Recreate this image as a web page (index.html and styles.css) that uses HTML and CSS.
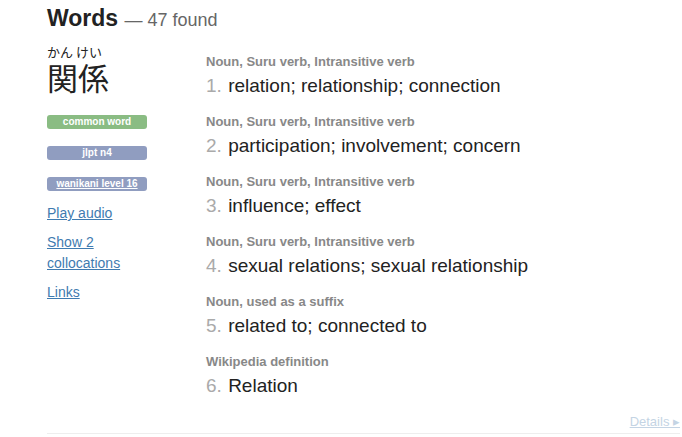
FILE: index.html
```html
<!DOCTYPE html>
<html lang="en">
<head>
  <meta charset="UTF-8">
  <meta name="viewport" content="width=device-width, initial-scale=1.0">
  <title>Words</title>
  <link rel="stylesheet" href="styles.css">
</head>
<body>
  <div class="results">
    <h2 class="section-title">Words <span class="count">— 47 found</span></h2>
    <div class="concept">
      <div class="concept-left">
        <div class="furigana">かん けい</div>
        <div class="kanji">関係</div>
        <div class="tags">
          <span class="tag tag-common">common word</span>
          <span class="tag tag-info">jlpt n4</span>
          <a class="tag tag-info tag-link" href="#">wanikani level 16</a>
        </div>
        <ul class="links">
          <li><a href="#">Play audio</a></li>
          <li><a href="#">Show 2 collocations</a></li>
          <li><a href="#">Links</a></li>
        </ul>
      </div>
      <div class="concept-right">
        <div class="meaning">
          <div class="meaning-tags">Noun, Suru verb, Intransitive verb</div>
          <div class="meaning-text"><span class="num">1.</span> relation; relationship; connection</div>
        </div>
        <div class="meaning">
          <div class="meaning-tags">Noun, Suru verb, Intransitive verb</div>
          <div class="meaning-text"><span class="num">2.</span> participation; involvement; concern</div>
        </div>
        <div class="meaning">
          <div class="meaning-tags">Noun, Suru verb, Intransitive verb</div>
          <div class="meaning-text"><span class="num">3.</span> influence; effect</div>
        </div>
        <div class="meaning">
          <div class="meaning-tags">Noun, Suru verb, Intransitive verb</div>
          <div class="meaning-text"><span class="num">4.</span> sexual relations; sexual relationship</div>
        </div>
        <div class="meaning">
          <div class="meaning-tags">Noun, used as a suffix</div>
          <div class="meaning-text"><span class="num">5.</span> related to; connected to</div>
        </div>
        <div class="meaning">
          <div class="meaning-tags">Wikipedia definition</div>
          <div class="meaning-text"><span class="num">6.</span> Relation</div>
        </div>
        <div class="details"><a href="#">Details ▸</a></div>
      </div>
    </div>
  </div>
</body>
</html>
```

FILE: styles.css
```css
body {
  font-family: 'Liberation Sans', Arial, 'Noto Sans CJK JP', sans-serif;
  margin: 0;
  background: #fff;
  color: #222;
}
.results {
  padding: 0 0 0 47px;
}
.section-title {
  margin: 0;
  padding-top: 4px;
  font-size: 23px;
  line-height: 28px;
  font-weight: bold;
  color: #222;
}
.count {
  font-size: 18px;
  font-weight: normal;
  color: #666;
}
.concept {
  display: flex;
  border-bottom: 1px solid #eee;
  margin-right: 2px;
}
.concept-left {
  width: 159px;
  flex-shrink: 0;
  padding-top: 9px;
}
.furigana {
  font-size: 13px;
  line-height: 17px;
  color: #222;
  font-family: 'Noto Sans CJK JP', sans-serif;
}
.kanji {
  font-size: 31px;
  line-height: 34px;
  font-family: 'Noto Sans CJK JP', sans-serif;
}
.tags {
  display: flex;
  flex-direction: column;
  gap: 17px;
  margin-top: 21px;
}
.tag {
  display: block;
  width: 100px;
  height: 14px;
  line-height: 14px;
  border-radius: 3px;
  font-size: 10px;
  font-weight: bold;
  color: #fff;
  text-align: center;
}
.tag-common { background: #8abc83; }
.tag-info { background: #909dc0; }
.tag-link { text-decoration: underline; }
.links {
  list-style: none;
  margin: 12px 0 0 0;
  padding: 0;
  font-size: 14px;
  line-height: 21px;
}
.links li {
  margin-bottom: 8px;
  width: 90px;
}
.links a {
  color: #3f7bb0;
}
.concept-right {
  flex: 1;
  padding-top: 20px;
}
.meaning {
  margin-bottom: 14px;
}
.meaning-tags {
  font-size: 13px;
  line-height: 16px;
  font-weight: bold;
  color: #888;
  margin-bottom: 2px;
}
.meaning-text {
  font-size: 19px;
  line-height: 28px;
  color: #222;
}
.num {
  color: #aaa;
  margin-right: 1px;
}
.details {
  text-align: right;
  font-size: 13px;
  line-height: 16px;
  padding-bottom: 3px;
  margin-top: 9px;
}
.details a {
  color: #c4d4e4;
}
```
